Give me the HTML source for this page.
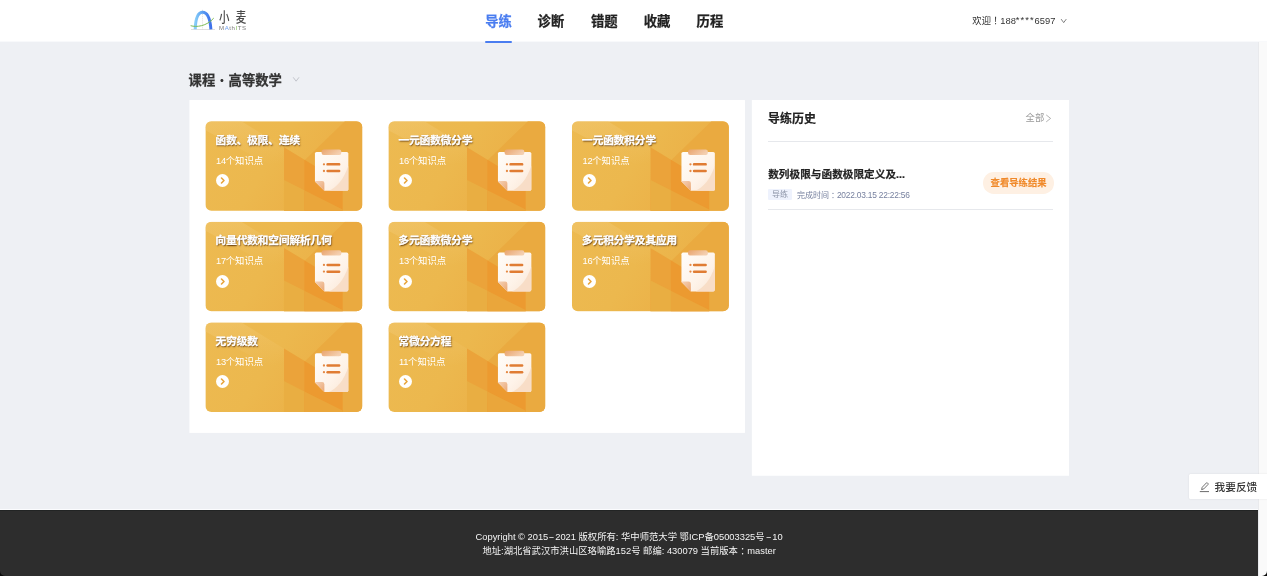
<!DOCTYPE html>
<html lang="zh-CN">
<head>
<meta charset="utf-8">
<title>小麦 MathITS - 导练</title>
<style>
*{box-sizing:border-box;margin:0;padding:0}
html,body{width:1267px;height:576px;overflow:hidden}
body{position:relative;background:#eef0f4;font-family:"Liberation Sans","Noto Sans CJK SC",sans-serif;color:#333;-webkit-font-smoothing:antialiased}
#root{position:absolute;left:0;top:0;width:1267px;height:576px;will-change:transform}
.abs{position:absolute}
.t{position:absolute;white-space:nowrap;line-height:1}
/* header */
#hdr{left:0;top:0;width:1267px;height:42px;background:#fff;border-bottom:1px solid #f8f9fb}
.nav{font-size:13.33px;font-weight:700;color:#222;top:14.9px;-webkit-text-stroke:0.25px currentColor}
.nav.on{color:#4a7df0}
#navline{left:485.3px;top:41.1px;width:26.6px;height:2px;border-radius:1px;background:#4a7df0}
/* scrollbar */
#sb{left:1258px;top:41.7px;width:9px;height:535px;background:#fafafa;border-left:1px solid #e9eaed}
/* panels */
#lp{left:189.3px;top:100px;width:555.7px;height:333px;background:#fff}
#rp{left:751.9px;top:100px;width:317.1px;height:375.8px;background:#fff}
/* cards */
.card{position:absolute;width:157px;height:89.5px}
.card svg{position:absolute;left:0;top:0}
.card .ct{position:absolute;left:10.2px;top:13.4px;font-size:10.67px;letter-spacing:-0.1px;font-weight:700;color:#fff;white-space:nowrap;line-height:1;-webkit-text-stroke:0.25px #fff;text-shadow:0.6px 0.9px 1.5px rgba(80,40,0,.95),0 0 0.6px rgba(255,255,255,.9)}
.card .cs{position:absolute;left:10.7px;top:35.4px;font-size:9.33px;color:#fff;white-space:nowrap;line-height:1}
.card .go{position:absolute;left:10.9px;top:52.8px;width:13px;height:13px;border-radius:50%;background:#fff}
.hy{display:inline-block;width:6.9px;text-align:center;transform:scaleX(1.9)}
/* footer */
#ft{left:0;top:510px;width:1258px;height:66px;background:#2d2d2d;border-top:1px solid #222424}
#ftl{left:0;top:509px;width:1258px;height:1px;background:#fbfcfe}
.fl{position:absolute;left:0;width:1258.2px;text-align:center;color:#f4f4f4;font-size:9.33px;line-height:1;white-space:nowrap}
</style>
</head>
<body>
<div id="root">
<div id="hdr" class="abs"></div>
<div id="sb" class="abs"></div>

<!-- nav -->
<div class="t nav on" style="left:485.3px">导练</div>
<div class="t nav" style="left:537.6px">诊断</div>
<div class="t nav" style="left:591px">错题</div>
<div class="t nav" style="left:643.7px">收藏</div>
<div class="t nav" style="left:696.6px">历程</div>
<div id="navline" class="abs"></div>


<!-- logo -->
<svg class="abs" style="left:186px;top:4px" width="66" height="34" viewBox="0 0 66 34">
  <defs>
    <linearGradient id="lg1" x1="0" y1="0" x2="1" y2="0">
      <stop offset="0" stop-color="#86cdf8"/><stop offset="0.5" stop-color="#5a9cf2"/><stop offset="1" stop-color="#3d70ea"/>
    </linearGradient>
  </defs>
  <line x1="5" y1="25.5" x2="29" y2="25.5" stroke="#c9c9c9" stroke-width="0.6"/>
  <line x1="16.5" y1="5.8" x2="16.5" y2="25.4" stroke="#c4c4c4" stroke-width="0.5" stroke-dasharray="1.2 0.9"/>
  <path d="M9.2 25.3 C9.6 13.5 12.6 8.3 16.6 8.3 C20.6 8.3 24 13.5 24.9 25.3" fill="none" stroke="url(#lg1)" stroke-width="3"/>
  <path d="M5 21.8 C10.5 23.4 20.5 22.4 27.5 14.4" fill="none" stroke="#7dbb55" stroke-width="1" stroke-linecap="round"/>
</svg>
<div class="t" style="left:219px;top:10.6px;font-size:13.1px;font-weight:500;color:#4a4a4a;letter-spacing:7.7px;transform:scaleX(0.8);transform-origin:0 0">小麦</div>
<div class="t" id="mits" style="left:219px;top:24.9px;font-size:6.1px;color:#7d7d7d;letter-spacing:0.56px">M<span style="color:#6d9ff0">A</span>th<span style="color:#7fbf55">I</span>TS</div>

<!-- welcome -->
<div class="t" id="wel" style="left:972.3px;top:16.9px;font-size:9.33px;color:#333">欢迎<span style="display:inline-block;width:9.33px;text-indent:2.4px">！</span><span>188</span><span style="letter-spacing:1.05px;position:relative;top:-0.7px">****</span><span>6597</span></div>
<svg class="abs" style="left:1060.4px;top:17.8px" width="8" height="6" viewBox="0 0 8 6"><path d="M1.1 1.1 L3.7 4.6 L6.3 1.1" fill="none" stroke="#555" stroke-width="0.75"/></svg>

<!-- section title -->
<div class="t" id="sec" style="left:188.6px;top:72.8px;font-size:13.33px;font-weight:700;color:#333;-webkit-text-stroke:0.25px currentColor">课程<span style="display:inline-block;width:13.33px;text-align:center;font-family:'Noto Sans CJK SC',sans-serif;font-weight:500;-webkit-text-stroke:0">·</span>高等数学</div>
<svg class="abs" style="left:291.6px;top:75.6px" width="9" height="7" viewBox="0 0 9 7"><path d="M1.2 1.3 L4.1 5.2 L7 1.3" fill="none" stroke="#b6b9c0" stroke-width="0.8"/></svg>

<!-- panels -->
<svg class="abs" style="left:0;top:0" width="1267" height="576" viewBox="0 0 1267 576"><rect x="189.4" y="100.05" width="555.55" height="332.85" fill="#fff"/><rect x="751.85" y="100.05" width="317.15" height="375.7" fill="#fff"/></svg>


<!-- shared svg defs -->
<svg width="0" height="0" style="position:absolute">
  <defs>
    <linearGradient id="cbg" x1="0" y1="0" x2="1" y2="0.35">
      <stop offset="0" stop-color="#edba51"/><stop offset="0.5" stop-color="#ecb84e"/><stop offset="1" stop-color="#ebae45"/>
    </linearGradient>
    <linearGradient id="band" x1="0" y1="0" x2="0.3" y2="1">
      <stop offset="0" stop-color="#f2c871" stop-opacity="0.55"/><stop offset="1" stop-color="#f2c871" stop-opacity="0"/>
    </linearGradient>
    <linearGradient id="paper" x1="0" y1="0" x2="1" y2="1">
      <stop offset="0" stop-color="#fffdfa"/><stop offset="0.6" stop-color="#fef3e9"/><stop offset="1" stop-color="#fae6d5"/>
    </linearGradient>
    <linearGradient id="clip" x1="0" y1="0" x2="1" y2="0.4">
      <stop offset="0" stop-color="#e9a46d"/><stop offset="1" stop-color="#f4cfb0"/>
    </linearGradient>
    <linearGradient id="fold" x1="0" y1="0" x2="1" y2="1">
      <stop offset="0" stop-color="#f5d3b8"/><stop offset="1" stop-color="#eaa673"/>
    </linearGradient>
    <clipPath id="ccp"><rect x="0" y="0" width="157" height="89.5" rx="6" ry="6"/></clipPath>
    <g id="cardbg" clip-path="url(#ccp)">
      <rect width="157" height="90" fill="url(#cbg)"/>
      <polygon points="0,0 36,0 80,27 80,52 0,9" fill="url(#band)"/>
      <polygon points="139.5,0 157,0 157,90 137,90 137,61.7 99.5,38.9" fill="#eaaa40"/>
      <polygon points="78.6,26.1 137.2,61.7 137.2,90 78.6,90" fill="#eba33a"/>
      <polygon points="99,38.6 137.2,61.7 137.2,90 99,90" fill="#ec9a30"/>
      <polygon points="78.6,58.7 99,69 99,90 78.6,90" fill="#e9ae42"/>
      <polygon points="99,69 137.2,88.2 137.2,90 99,90" fill="#eaa63b"/>
      <!-- clipboard --><g transform="translate(0.55,0.1)">
      <path d="M110.6 30.7 H140.8 Q142.4 30.7 142.4 32.3 V67.9 Q142.4 69.5 140.8 69.5 H118.4 L109 60.1 V32.3 Q109 30.7 110.6 30.7 Z" fill="url(#paper)"/>
      <path d="M142.4 44.5 C138 58 131 66 123 69.5 L140.8 69.5 Q142.4 69.5 142.4 67.9 Z" fill="#f7dcc4" opacity="0.9"/>
      <path d="M109 59.6 L109 60.1 L118.4 69.5 L118.4 61.8 Q118.4 59.6 116.2 59.6 Z" fill="url(#fold)"/>
      <rect x="115.6" y="28.3" width="19.8" height="5.4" rx="2.2" fill="url(#clip)"/>
      <circle cx="118" cy="43" r="1.15" fill="#e58a45"/>
      <rect x="120.4" y="41.8" width="14" height="2.5" rx="1.2" fill="#e07c33"/>
      <circle cx="118" cy="49.7" r="1.15" fill="#e58a45"/>
      <rect x="120.4" y="48.5" width="14" height="2.5" rx="1.2" fill="#e07c33"/>
    </g></g>
  </defs>
</svg>

<!-- cards -->
<svg class="abs" style="left:189px;top:100px" width="556" height="333" viewBox="189 100 556 333">
  <use href="#cardbg" x="205.4" y="121.2"/>
  <use href="#cardbg" x="388.4" y="121.2"/>
  <use href="#cardbg" x="571.9" y="121.2"/>
  <use href="#cardbg" x="205.4" y="221.8"/>
  <use href="#cardbg" x="388.4" y="221.8"/>
  <use href="#cardbg" x="571.9" y="221.8"/>
  <use href="#cardbg" x="205.4" y="322.4"/>
  <use href="#cardbg" x="388.4" y="322.4"/>
</svg>
<div class="card" style="left:205.4px;top:121.2px"><div class="ct">函数、极限、连续</div><div class="cs"><span style="letter-spacing:-0.35px">14</span>个知识点</div><div class="go"><svg width="13" height="13" viewBox="0 0 13 13" style="position:absolute;left:0;top:0"><path d="M5.5 4 L8 6.5 L5.5 9" fill="none" stroke="#e8a53c" stroke-width="1.6" stroke-linecap="round" stroke-linejoin="round"/></svg></div></div>
<div class="card" style="left:388.4px;top:121.2px"><div class="ct">一元函数微分学</div><div class="cs"><span style="letter-spacing:-0.35px">16</span>个知识点</div><div class="go"><svg width="13" height="13" viewBox="0 0 13 13" style="position:absolute;left:0;top:0"><path d="M5.5 4 L8 6.5 L5.5 9" fill="none" stroke="#e8a53c" stroke-width="1.6" stroke-linecap="round" stroke-linejoin="round"/></svg></div></div>
<div class="card" style="left:571.9px;top:121.2px"><div class="ct">一元函数积分学</div><div class="cs"><span style="letter-spacing:-0.35px">12</span>个知识点</div><div class="go"><svg width="13" height="13" viewBox="0 0 13 13" style="position:absolute;left:0;top:0"><path d="M5.5 4 L8 6.5 L5.5 9" fill="none" stroke="#e8a53c" stroke-width="1.6" stroke-linecap="round" stroke-linejoin="round"/></svg></div></div>
<div class="card" style="left:205.4px;top:221.8px"><div class="ct">向量代数和空间解析几何</div><div class="cs"><span style="letter-spacing:-0.35px">17</span>个知识点</div><div class="go"><svg width="13" height="13" viewBox="0 0 13 13" style="position:absolute;left:0;top:0"><path d="M5.5 4 L8 6.5 L5.5 9" fill="none" stroke="#e8a53c" stroke-width="1.6" stroke-linecap="round" stroke-linejoin="round"/></svg></div></div>
<div class="card" style="left:388.4px;top:221.8px"><div class="ct">多元函数微分学</div><div class="cs"><span style="letter-spacing:-0.35px">13</span>个知识点</div><div class="go"><svg width="13" height="13" viewBox="0 0 13 13" style="position:absolute;left:0;top:0"><path d="M5.5 4 L8 6.5 L5.5 9" fill="none" stroke="#e8a53c" stroke-width="1.6" stroke-linecap="round" stroke-linejoin="round"/></svg></div></div>
<div class="card" style="left:571.9px;top:221.8px"><div class="ct">多元积分学及其应用</div><div class="cs"><span style="letter-spacing:-0.35px">16</span>个知识点</div><div class="go"><svg width="13" height="13" viewBox="0 0 13 13" style="position:absolute;left:0;top:0"><path d="M5.5 4 L8 6.5 L5.5 9" fill="none" stroke="#e8a53c" stroke-width="1.6" stroke-linecap="round" stroke-linejoin="round"/></svg></div></div>
<div class="card" style="left:205.4px;top:322.4px"><div class="ct">无穷级数</div><div class="cs"><span style="letter-spacing:-0.35px">13</span>个知识点</div><div class="go"><svg width="13" height="13" viewBox="0 0 13 13" style="position:absolute;left:0;top:0"><path d="M5.5 4 L8 6.5 L5.5 9" fill="none" stroke="#e8a53c" stroke-width="1.6" stroke-linecap="round" stroke-linejoin="round"/></svg></div></div>
<div class="card" style="left:388.4px;top:322.4px"><div class="ct">常微分方程</div><div class="cs"><span style="letter-spacing:-0.35px">11</span>个知识点</div><div class="go"><svg width="13" height="13" viewBox="0 0 13 13" style="position:absolute;left:0;top:0"><path d="M5.5 4 L8 6.5 L5.5 9" fill="none" stroke="#e8a53c" stroke-width="1.6" stroke-linecap="round" stroke-linejoin="round"/></svg></div></div>

<!-- right panel content -->
<div class="t" style="left:768px;top:112.5px;font-size:12px;font-weight:700;color:#222;-webkit-text-stroke:0.2px currentColor">导练历史</div>
<div class="t" style="left:1025.6px;top:114px;font-size:9.33px;color:#999">全部</div>
<svg class="abs" style="left:1045.2px;top:114px" width="7" height="9" viewBox="0 0 7 9"><path d="M1.2 0.9 L5.6 4.4 L1.2 7.9" fill="none" stroke="#999" stroke-width="0.75"/></svg>
<div class="abs" style="left:768px;top:141px;width:285.3px;height:0.8px;background:#e6e8ec"></div>
<div class="t" style="left:768.2px;top:168.6px;font-size:10.67px;font-weight:700;color:#222;-webkit-text-stroke:0.2px currentColor">数列极限与函数极限定义及...</div>
<div class="abs" style="left:768.2px;top:188.8px;width:23.4px;height:11.4px;background:#eef2fd;border-radius:1.3px"></div>
<div class="t" style="left:771.9px;top:191.2px;font-size:8px;color:#8d95a8">导练</div>
<div class="t" style="left:796.9px;top:191.2px;font-size:8px;color:#77819f">完成时间<span style="display:inline-block;width:8px;text-indent:2px">：</span><span style="font-size:8.4px;letter-spacing:-0.21px">2022.03.15 22:22:56</span></div>
<div class="abs" style="left:983.4px;top:172.2px;width:70.2px;height:21.4px;border-radius:10.7px;background:#fef0e3"></div>
<div class="t" style="left:990.6px;top:179.2px;font-size:9.33px;font-weight:700;color:#f08a2b;-webkit-text-stroke:0.15px currentColor">查看导练结果</div>
<div class="abs" style="left:768px;top:209.2px;width:285.3px;height:0.8px;background:#e6e8ec"></div>

<!-- feedback -->
<div class="abs" style="left:1188.7px;top:474.4px;width:80px;height:24.8px;background:#fff;border-radius:1.5px 0 0 1.5px;box-shadow:0 0 2px rgba(0,0,0,.10)"></div>
<svg class="abs" style="left:1199px;top:481px" width="11" height="12" viewBox="0 0 11 12"><path d="M2.6 8.6 L3.2 6.3 L7.4 1.9 Q7.9 1.4 8.4 1.9 L9 2.5 Q9.5 3 9 3.5 L4.8 7.9 Z" fill="none" stroke="#444" stroke-width="0.75" stroke-linejoin="round"/><line x1="0.8" y1="10.6" x2="10" y2="10.6" stroke="#444" stroke-width="0.8"/></svg>
<div class="t" style="left:1214.6px;top:481.9px;font-size:10.67px;font-weight:500;color:#333">我要反馈</div>

<!-- footer -->
<div id="ftl" class="abs"></div>
<div id="ft" class="abs">
  <div class="fl" style="top:22.1px">Copyright © 2015<span class="hy">-</span>2021 版权所有: 华中师范大学 鄂ICP备05003325号<span class="hy" style="width:7.6px">-</span>10</div>
  <div class="fl" style="top:35.7px">地址:湖北省武汉市洪山区珞喻路152号 邮编: 430079 当前版本<span style="display:inline-block;width:9.33px;text-indent:2.4px;text-align:left">：</span>master</div>
</div>

<!-- window corners -->
<svg class="abs" style="left:0;top:571px" width="5" height="5" viewBox="0 0 6 6"><path d="M0 0 L0 6 L6 6 A6 6 0 0 1 0 0 Z" fill="#0a0a0a"/></svg>
<svg class="abs" style="left:1262px;top:571px" width="5" height="5" viewBox="0 0 6 6"><path d="M6 0 L6 6 L0 6 A6 6 0 0 0 6 0 Z" fill="#0a0a0a"/></svg>
</div>
</body>
</html>
